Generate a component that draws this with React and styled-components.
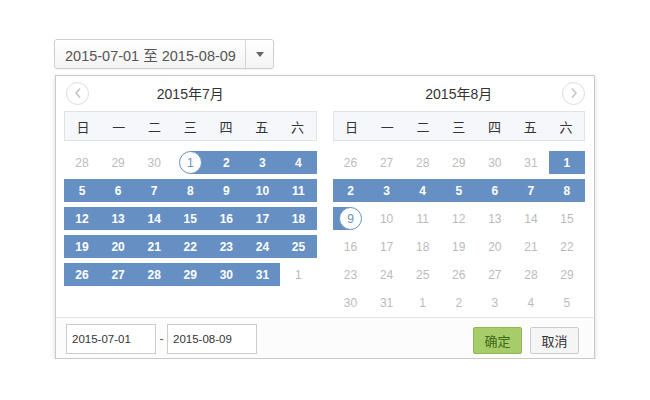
import React from 'react'
import styled, { createGlobalStyle } from 'styled-components'

const GlobalStyle = createGlobalStyle`
  body {
    margin: 0;
    background: #fff;
    font-family: "Liberation Sans", "Noto Sans CJK SC", sans-serif;
  }
`

const Page = styled.div`
  padding: 39px 0 0 54px;
`

const Trigger = styled.div`
  display: inline-flex;
  height: 30px;
  box-sizing: border-box;
  border: 1px solid #d0d0d0;
  border-radius: 3px;
  background: linear-gradient(#fff, #f3f3f3);
  box-shadow: 0 1px 1px rgba(0, 0, 0, 0.05);
`

const TriggerText = styled.div`
  display: flex;
  align-items: center;
  width: 191px;
  box-sizing: border-box;
  padding: 0 0 0 10px;
  font-size: 14.5px;
  color: #555;
  border-right: 1px solid #d6d6d6;
  white-space: nowrap;
`

const Caret = styled.div`
  width: 27px;
  display: flex;
  align-items: center;
  justify-content: center;
  &::after {
    content: '';
    border-left: 4px solid transparent;
    border-right: 4px solid transparent;
    border-top: 5px solid #666;
  }
`

const Panel = styled.div`
  margin-top: 6px;
  margin-left: 1px;
  width: 540px;
  box-sizing: border-box;
  border: 1px solid #c9c9c9;
  background: #fff;
  box-shadow: 0 2px 5px rgba(0, 0, 0, 0.15);
`

const Months = styled.div`
  display: flex;
  align-items: flex-start;
  gap: 16px;
  padding: 5px 9px 3px 8px;
`

const Calendar = styled.div`
  width: 253px;
`

const CalHeader = styled.div`
  display: grid;
  grid-template-columns: 24px 1fr 24px;
  align-items: center;
  height: 24px;
`

const Title = styled.div`
  text-align: center;
  font-size: 14px;
  color: #333;
`

const Arrow = styled.div`
  width: 23px;
  height: 23px;
  box-sizing: border-box;
  border: 1px solid #dcdcdc;
  border-radius: 50%;
  display: flex;
  align-items: center;
  justify-content: center;
  margin-left: ${({ $side }) => ($side === 'left' ? '2px' : '1px')};
`

const WeekRow = styled.div`
  margin-top: 6px;
  height: 30px;
  box-sizing: border-box;
  display: grid;
  grid-template-columns: repeat(7, 1fr);
  align-items: center;
  background: #f5f7fa;
  border: 1px solid #dfe3e8;
  font-size: 13px;
  color: #333;
  text-align: center;
`

const Days = styled.div`
  margin-top: 10px;
  display: grid;
  grid-template-columns: repeat(7, 1fr);
  grid-auto-rows: 23px;
  row-gap: 5px;
`

const blue = '#6690c4'

const bgFor = (kind) => {
  if (kind === 'in') return blue
  if (kind === 'start') return `linear-gradient(to right, transparent 50%, ${blue} 50%)`
  if (kind === 'end') return `linear-gradient(to right, ${blue} 50%, transparent 50%)`
  return 'transparent'
}

const Day = styled.div`
  display: flex;
  align-items: center;
  justify-content: center;
  font-size: 12px;
  background: ${({ $kind }) => bgFor($kind)};
  color: ${({ $kind }) => ($kind === 'in' ? '#fff' : '#bbb')};
  font-weight: ${({ $kind }) => ($kind === 'in' ? 'bold' : 'normal')};
`

const Ring = styled.span`
  width: 23px;
  height: 23px;
  box-sizing: border-box;
  border: 1px solid ${blue};
  border-radius: 50%;
  background: #fff;
  color: ${blue};
  font-size: 12px;
  display: flex;
  align-items: center;
  justify-content: center;
`

const Footer = styled.div`
  display: flex;
  align-items: center;
  border-top: 1px solid #e6e6e6;
  background: #fcfcfc;
  padding: 6px 15px 4px 10px;
`

const DateInput = styled.div`
  width: 90px;
  height: 30px;
  box-sizing: border-box;
  border: 1px solid #ccc;
  background: #fff;
  display: flex;
  align-items: center;
  padding-left: 5px;
  font-size: 11.5px;
  color: #333;
`

const Dash = styled.span`
  width: 11px;
  text-align: center;
  font-size: 12px;
  color: #555;
`

const Spacer = styled.div`
  flex: 1;
`

const Button = styled.div`
  width: 49px;
  height: 27px;
  box-sizing: border-box;
  margin-left: 8px;
  margin-top: 2px;
  display: flex;
  align-items: center;
  justify-content: center;
  font-size: 13px;
  border-radius: 2px;
  border: 1px solid ${({ $primary }) => ($primary ? '#90b752' : '#ccc')};
  background: ${({ $primary }) => ($primary ? '#a6cd69' : '#f5f5f5')};
  color: ${({ $primary }) => ($primary ? '#3f6a1a' : '#333')};
`

const Chevron = ({ dir }) => (
  <svg width="10" height="12" viewBox="0 0 10 12">
    <path
      d={dir === 'left' ? 'M7 1.5 L3 6 L7 10.5' : 'M3 1.5 L7 6 L3 10.5'}
      fill="none"
      stroke="#c4c4c4"
      strokeWidth="1.6"
    />
  </svg>
)

const weekNames = ['日', '一', '二', '三', '四', '五', '六']

const julyDays = [
  [28, 'out'], [29, 'out'], [30, 'out'], [1, 'start'],
  ...Array.from({ length: 30 }, (_, i) => [i + 2, 'in']),
  [1, 'out'],
]

const augDays = [
  [26, 'out'], [27, 'out'], [28, 'out'], [29, 'out'], [30, 'out'], [31, 'out'],
  ...Array.from({ length: 8 }, (_, i) => [i + 1, 'in']),
  [9, 'end'],
  ...Array.from({ length: 22 }, (_, i) => [i + 10, 'out']),
  [1, 'out'], [2, 'out'], [3, 'out'], [4, 'out'], [5, 'out'],
]

const Month = ({ title, days, prev, next }) => (
  <Calendar>
    <CalHeader>
      <div>{prev && <Arrow $side="left"><Chevron dir="left" /></Arrow>}</div>
      <Title>{title}</Title>
      <div>{next && <Arrow $side="right"><Chevron dir="right" /></Arrow>}</div>
    </CalHeader>
    <WeekRow>
      {weekNames.map((w) => <span key={w}>{w}</span>)}
    </WeekRow>
    <Days>
      {days.map(([d, kind], i) => (
        <Day key={i} $kind={kind}>
          {kind === 'start' || kind === 'end' ? <Ring>{d}</Ring> : d}
        </Day>
      ))}
    </Days>
  </Calendar>
)

const App = () => {
  return (
    <Page>
      <GlobalStyle />
      <Trigger>
        <TriggerText>2015-07-01 至 2015-08-09</TriggerText>
        <Caret />
      </Trigger>
      <Panel>
        <Months>
          <Month title="2015年7月" days={julyDays} prev />
          <Month title="2015年8月" days={augDays} next />
        </Months>
        <Footer>
          <DateInput>2015-07-01</DateInput>
          <Dash>-</Dash>
          <DateInput>2015-08-09</DateInput>
          <Spacer />
          <Button $primary>确定</Button>
          <Button>取消</Button>
        </Footer>
      </Panel>
    </Page>
  )
}

export default App
